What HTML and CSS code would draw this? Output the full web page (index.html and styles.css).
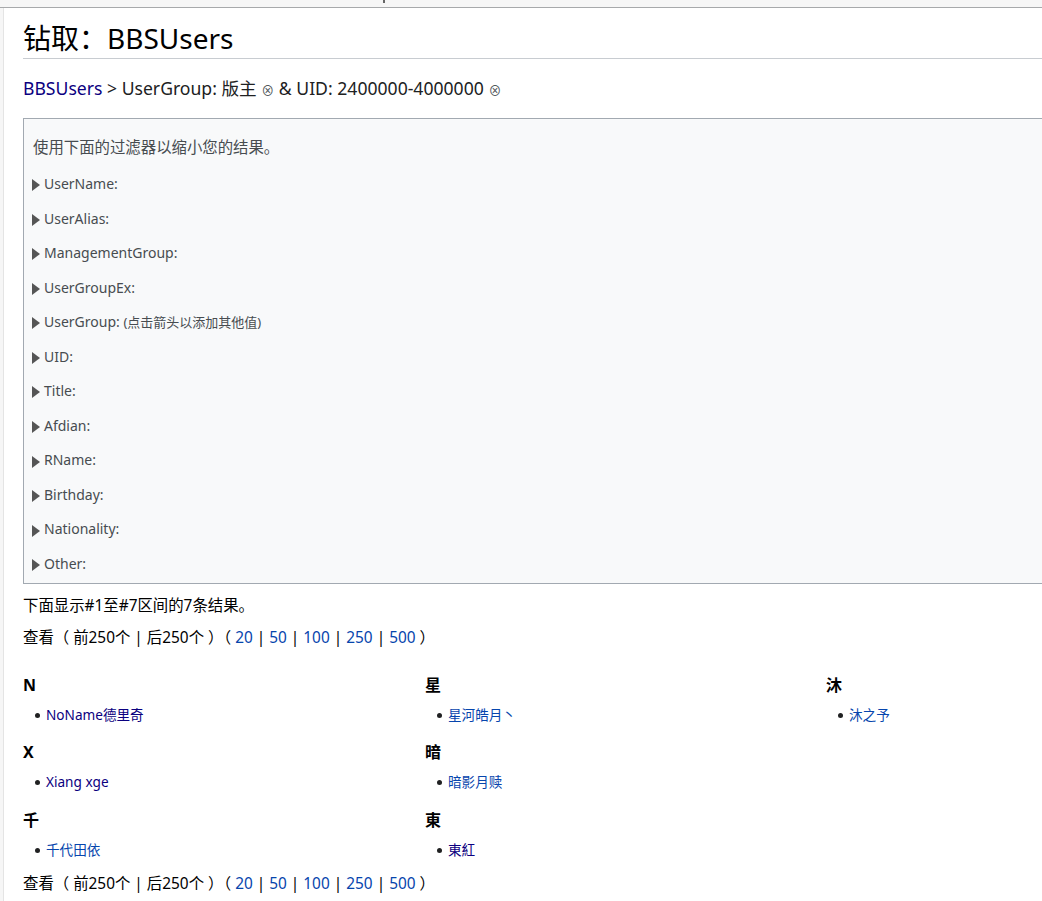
FILE: index.html
```html
<!DOCTYPE html>
<html lang="zh">
<head>
<meta charset="utf-8">
<title>钻取：BBSUsers</title>
<link rel="stylesheet" href="styles.css">
</head>
<body>
<div class="page-base"><span class="tick"></span></div>
<div class="content">
  <h1 class="title">钻取：BBSUsers</h1>
  <div class="crumbs"><a class="visited" href="#">BBSUsers</a> &gt; UserGroup: 版主 <span class="x">⊗</span> &amp; UID: 2400000-4000000 <span class="x">⊗</span></div>
  <div class="filters">
    <p class="intro">使用下面的过滤器以缩小您的结果。</p>
    <div class="frow"><span class="tri"></span><span>UserName:</span></div>
    <div class="frow"><span class="tri"></span><span>UserAlias:</span></div>
    <div class="frow"><span class="tri"></span><span>ManagementGroup:</span></div>
    <div class="frow"><span class="tri"></span><span>UserGroupEx:</span></div>
    <div class="frow"><span class="tri"></span><span>UserGroup: <small class="hint">(点击箭头以添加其他值)</small></span></div>
    <div class="frow"><span class="tri"></span><span>UID:</span></div>
    <div class="frow"><span class="tri"></span><span>Title:</span></div>
    <div class="frow"><span class="tri"></span><span>Afdian:</span></div>
    <div class="frow"><span class="tri"></span><span>RName:</span></div>
    <div class="frow"><span class="tri"></span><span>Birthday:</span></div>
    <div class="frow"><span class="tri"></span><span>Nationality:</span></div>
    <div class="frow"><span class="tri"></span><span>Other:</span></div>
  </div>
  <p class="line first">下面显示#1至#7区间的7条结果。</p>
  <p class="line">查看（ 前250个 | 后250个 ）（ <a href="#">20</a> | <a href="#">50</a> | <a href="#">100</a> | <a href="#">250</a> | <a href="#">500</a> ）</p>
  <div class="cols">
    <div class="col">
      <h3 class="group">N</h3>
      <ul class="items"><li><a class="visited" href="#">NoName德里奇</a></li></ul>
      <h3 class="group">X</h3>
      <ul class="items"><li><a class="visited" href="#">Xiang xge</a></li></ul>
      <h3 class="group">千</h3>
      <ul class="items"><li><a href="#">千代田依</a></li></ul>
    </div>
    <div class="col">
      <h3 class="group">星</h3>
      <ul class="items"><li><a href="#">星河皓月丶</a></li></ul>
      <h3 class="group">暗</h3>
      <ul class="items"><li><a href="#">暗影月赎</a></li></ul>
      <h3 class="group">東</h3>
      <ul class="items"><li><a class="visited" href="#">東紅</a></li></ul>
    </div>
    <div class="col">
      <h3 class="group">沐</h3>
      <ul class="items"><li><a href="#">沐之予</a></li></ul>
    </div>
  </div>
  <p class="line last">查看（ 前250个 | 后250个 ）（ <a href="#">20</a> | <a href="#">50</a> | <a href="#">100</a> | <a href="#">250</a> | <a href="#">500</a> ）</p>
</div>
</body>
</html>
```
FILE: styles.css
```css
html, body {
  margin: 0;
  padding: 0;
  overflow: hidden;
  background: #f6f6f6;
}
body {
  font-family: "Noto Sans", "Noto Sans CJK SC", sans-serif;
  color: #202122;
  width: 1400px;
}
a {
  color: #0645ad;
  text-decoration: none;
}
a.visited {
  color: #0b0080;
}
.page-base {
  height: 7px;
  border-bottom: 1px solid #a7a9ab;
  background: #f6f6f6;
  position: relative;
}
.tick {
  position: absolute;
  left: 383px;
  top: 0;
  width: 2px;
  height: 3px;
  background: #666;
}
.content {
  margin-left: 3px;
  border-left: 1px solid #e4e4e4;
  background: #fff;
  padding: 12px 0 40px 19px;
}
.title {
  margin: 0;
  font-weight: normal;
  font-size: 28px;
  line-height: 36px;
  color: #000;
  padding-bottom: 2px;
  border-bottom: 1px solid #c8ccd1;
}
.crumbs {
  margin-top: 15px;
  font-size: 17.6px;
  line-height: 29px;
  color: #202122;
}
.crumbs .x {
  font-size: 13px;
  color: #54595d;
}
.filters {
  margin-top: 13px;
  border: 1px solid #a2a9b1;
  background: #f8f9fa;
  padding: 18px 0 8px 8px;
  color: #474c50;
  font-size: 14px;
  line-height: 22.4px;
}
.intro {
  margin: 0 0 13.6px 1px;
  font-size: 15.4px;
}
.frow {
  display: flex;
  align-items: center;
  gap: 4px;
  margin-bottom: 12.15px;
}
.frow:last-child {
  margin-bottom: 0;
}
.tri {
  width: 0;
  height: 0;
  border-left: 8px solid #555;
  border-top: 6.5px solid transparent;
  border-bottom: 6.5px solid transparent;
  margin-top: 2px;
}
.hint {
  font-size: 13px;
}
.line {
  margin: 9.6px 0 0;
  font-size: 15.4px;
  line-height: 22.4px;
  color: #000;
}
.line.first {
  margin-top: 11px;
}
.line.last {
  margin-top: 12px;
}
.cols {
  display: grid;
  grid-template-columns: 402px 401px 401px;
  margin-top: 23px;
}
.col {
  display: flex;
  flex-direction: column;
}
.group {
  margin: 14px 0 0;
  font-size: 16px;
  line-height: 25.6px;
  font-weight: bold;
  color: #000;
}
.group:first-child {
  margin-top: 0;
}
.items {
  list-style: none;
  margin: 5.5px 0 0;
  padding: 0;
  font-size: 13.6px;
  line-height: 22.4px;
}
.items li {
  display: flex;
  align-items: center;
  gap: 6px;
}
.items li::before {
  content: "";
  width: 5px;
  height: 5px;
  border-radius: 50%;
  background: #202122;
  margin-left: 12px;
}
```
